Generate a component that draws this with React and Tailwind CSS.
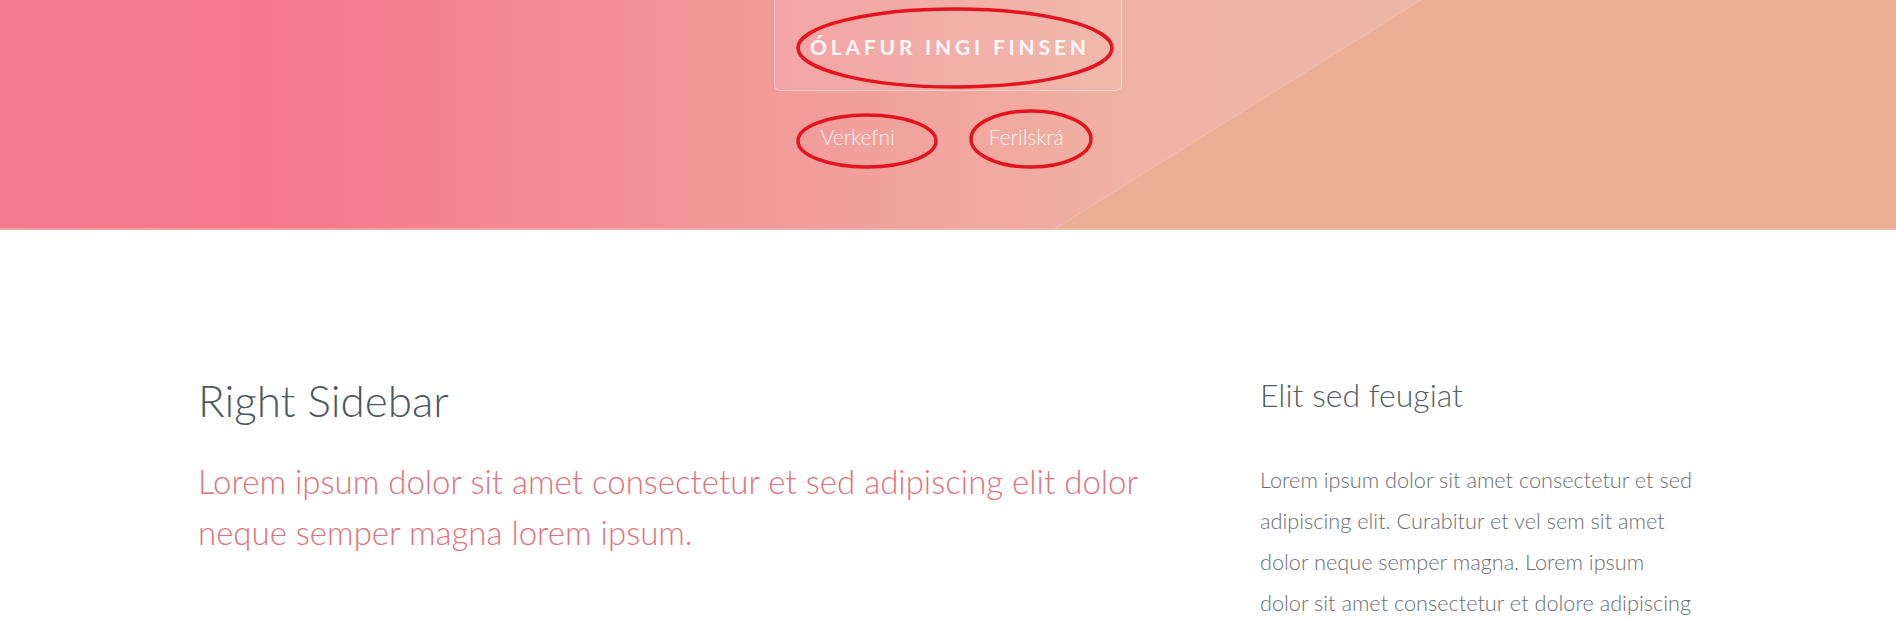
import React from "react";

const font = "font-['Source_Sans_Pro','Lato',sans-serif]";

function HeaderBackground() {
  return (
    <svg
      className="absolute inset-0 h-full w-full"
      viewBox="0 0 1896 230"
      preserveAspectRatio="none"
    >
      <defs>
        <linearGradient id="bg" x1="0" y1="0" x2="1" y2="0">
          <stop offset="0" stopColor="#f47c90" />
          <stop offset="0.14" stopColor="#f5778c" />
          <stop offset="0.38" stopColor="#f29799" />
          <stop offset="0.6" stopColor="#efb2a3" />
          <stop offset="0.75" stopColor="#edb8a6" />
          <stop offset="1" stopColor="#ecb49f" />
        </linearGradient>
      </defs>
      <rect x="0" y="0" width="1896" height="230" fill="url(#bg)" />
      <polygon points="1421,0 1896,0 1896,230 1053,230" fill="#ebae97" />
      <line x1="1421" y1="0" x2="1053" y2="230" stroke="#f3c7b6" strokeWidth="1" opacity="0.7" />
      <rect x="0" y="228" width="1896" height="2" fill="#f0c2b2" opacity="0.5" />
    </svg>
  );
}

function Marks() {
  // red circles drawn over the header
  return (
    <svg
      className="pointer-events-none absolute left-0 top-0"
      width="1896"
      height="230"
      viewBox="0 0 1896 230"
    >
      <g fill="none" stroke="#e3141f" strokeWidth="3.5">
        <ellipse cx="955" cy="48" rx="157" ry="39" />
        <ellipse cx="867" cy="141" rx="69" ry="26" />
        <ellipse cx="1031" cy="139" rx="60" ry="28" />
      </g>
    </svg>
  );
}

export default function App() {
  return (
    <div className={`min-h-screen bg-white ${font}`}>

      {/* HEADER */}
      <header className="relative h-[230px] overflow-hidden">
        <HeaderBackground />

        <div className="relative flex flex-col items-center">

          <div className="-mt-[12px] flex w-[348px] justify-center rounded-[6px] border border-white/40 bg-white/10 pt-[40px] pb-[25px]">
            <h1 className="whitespace-nowrap pl-[0.18em] text-[21px] font-bold leading-[36px] tracking-[0.18em] text-white/90">
              ÓLAFUR INGI FINSEN
            </h1>
          </div>

          <nav className="mt-[32px] mr-[12px] flex gap-[94px] text-[21px] font-light leading-[28px] text-white/85">
            <a href="#">Verkefni</a>
            <a href="#">Ferilskrá</a>
          </nav>

        </div>

        <Marks />
      </header>

      {/* CONTENT */}
      <main className="mx-auto grid w-[1500px] grid-cols-[1000px_438px] gap-[62px] pt-[140px]">

        <section>
          <h2 className="text-[44px] font-light leading-[60px] text-[#4f5861]">
            Right Sidebar
          </h2>

          <p className="mt-[26px] text-[33px] font-light leading-[51px] text-[#e3707a]">
            Lorem ipsum dolor sit amet consectetur et sed adipiscing elit dolor
            neque semper magna lorem ipsum.
          </p>
        </section>

        <aside>
          <h3 className="text-[32px] font-light leading-[50px] text-[#555d65]">
            Elit sed feugiat
          </h3>

          <p className="mt-[40px] whitespace-nowrap text-[21.7px] font-light leading-[41px] text-[#6a6e72]">
            Lorem ipsum dolor sit amet consectetur et sed
            <br />
            adipiscing elit. Curabitur et vel sem sit amet
            <br />
            dolor neque semper magna. Lorem ipsum
            <br />
            dolor sit amet consectetur et dolore adipiscing
          </p>
        </aside>

      </main>
    </div>
  );
}
